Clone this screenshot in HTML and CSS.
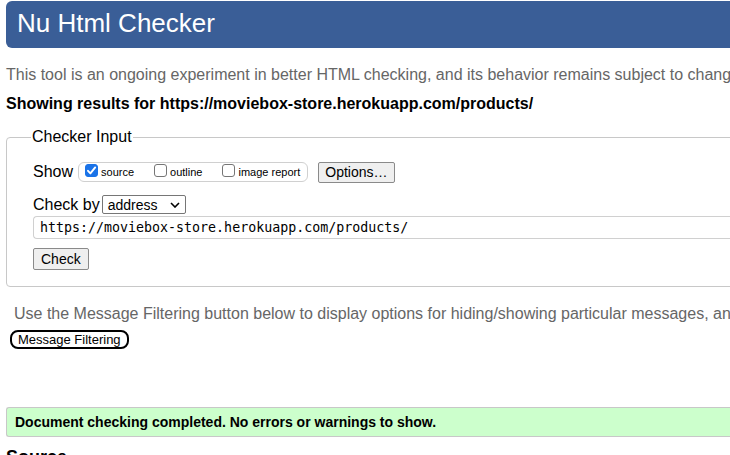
FILE: index.html
```html
<!DOCTYPE html>
<html>
<head>
<meta charset="utf-8">
<link rel="stylesheet" href="styles.css">
</head>
<body>
<div class="page">
  <h1 class="banner">Nu Html Checker</h1>
  <p class="intro">This tool is an ongoing experiment in better HTML checking, and its behavior remains subject to change</p>
  <p class="showing">Showing results for https://moviebox-store.herokuapp.com/products/</p>
  <fieldset class="input">
    <legend>Checker Input</legend>
    <div class="row show-row">
      <span class="label">Show</span>
      <span class="group">
        <label class="opt"><span class="cb checked"><svg viewBox="0 0 13 13" width="13" height="13"><path d="M3 6.8 L5.4 9.4 L10.2 3.4" fill="none" stroke="#fff" stroke-width="1.9" stroke-linecap="round" stroke-linejoin="round"/></svg></span>source</label>
        <label class="opt"><span class="cb"></span>outline</label>
        <label class="opt"><span class="cb"></span>image report</label>
      </span>
      <span class="btn options">Options…</span>
    </div>
    <div class="row by-row">
      <span class="label">Check by</span>
      <span class="select">address<svg viewBox="0 0 10 6" width="10" height="6"><path d="M1 1 L5 5 L9 1" fill="none" stroke="#000" stroke-width="1.6"/></svg></span>
    </div>
    <div class="url">https://moviebox-store.herokuapp.com/products/</div>
    <span class="btn check">Check</span>
  </fieldset>
  <p class="filter-note">Use the Message Filtering button below to display options for hiding/showing particular messages, and</p>
  <span class="mf">Message Filtering</span>
  <div class="success">Document checking completed. No errors or warnings to show.</div>
  <h2 class="source">Source</h2>
</div>
</body>
</html>
```

FILE: styles.css
```css
* { box-sizing: border-box; }
html, body { margin: 0; padding: 0; background: #fff; overflow: hidden; }
body { font-family: "Liberation Sans", Arial, sans-serif; color: #000; }
.page { width: 760px; padding: 1px 0 0 6px; }
.banner {
  margin: 0;
  height: 47px;
  background: #3a5e97;
  color: #fff;
  font-weight: normal;
  font-size: 26px;
  line-height: 45px;
  padding-left: 11px;
  border-radius: 6px 0 0 6px;
}
.intro { margin: 17px 0 0; font-size: 16px; line-height: 19px; color: #666; white-space: nowrap; }
.showing { margin: 10px 0 0; font-size: 16px; line-height: 19px; font-weight: bold; white-space: nowrap; }
.input {
  margin: 15px 0 0;
  padding: 15px 0 16px 26px;
  border: 1px solid #c8c8c8;
  border-radius: 4px;
  min-width: 0;
}
.input legend { font-size: 16px; padding: 0 1px; margin-left: -2px; }
.row { display: flex; align-items: center; }
.label { font-size: 16px; }
.show-row { height: 22px; }
.group {
  display: inline-flex; align-items: center;
  margin-left: 5px;
  height: 20px;
  border: 1px solid #d0d0d0;
  border-radius: 6px;
  padding: 0 7px 0 6px;
  font-size: 11px;
}
.opt { display: inline-flex; align-items: center; margin-right: 20px; }
.opt:last-child { margin-right: 0; }
.cb {
  display: inline-block; width: 13px; height: 13px;
  border: 1px solid #767676; border-radius: 3px; margin-right: 3px;
  position: relative; top: -2px; background: #fff;
}
.cb.checked { background: #1a73e8; border-color: #1a73e8; }
.cb svg { display: block; margin: -1px; }
.btn {
  display: inline-block;
  font-size: 14px;
  border: 1px solid #8a8a8a;
  border-radius: 2px;
  background: #efefef;
  padding: 1px 6px;
  line-height: 17px;
}
.options { margin-left: 10px; }
.by-row { margin-top: 12px; }
.select {
  display: inline-flex; align-items: center; justify-content: space-between;
  margin-left: 2px;
  width: 84px; height: 19px;
  border: 1px solid #767676; border-radius: 2px;
  font-size: 14px; padding: 0 5px;
}
.url {
  margin-top: 2px;
  height: 23px;
  border: 1px solid #d0d0d0;
  border-right: none;
  border-radius: 4px 0 0 4px;
  font-family: "DejaVu Sans Mono", monospace;
  font-size: 13.3px;
  line-height: 21px;
  padding-left: 6px;
  white-space: nowrap;
}
.check { margin-top: 9px; padding: 1px 7px; line-height: 18px; }
.filter-note { margin: 17px 0 0 8px; font-size: 16px; line-height: 19px; color: #666; white-space: nowrap; }
.mf {
  display: inline-block; margin: 7px 0 0 4px;
  border: 2px solid #000; border-radius: 8px;
  font-size: 13px; line-height: 15px; padding: 0 6px;
}
.success {
  margin-top: 58px;
  height: 30px;
  background: #ccffcc;
  border: 1px solid #c8c8c8;
  border-right: none;
  border-radius: 3px 0 0 3px;
  font-size: 14px; font-weight: bold;
  line-height: 28px;
  padding-left: 8px;
}
.source { margin: 10px 0 0; font-size: 18px; }
```
